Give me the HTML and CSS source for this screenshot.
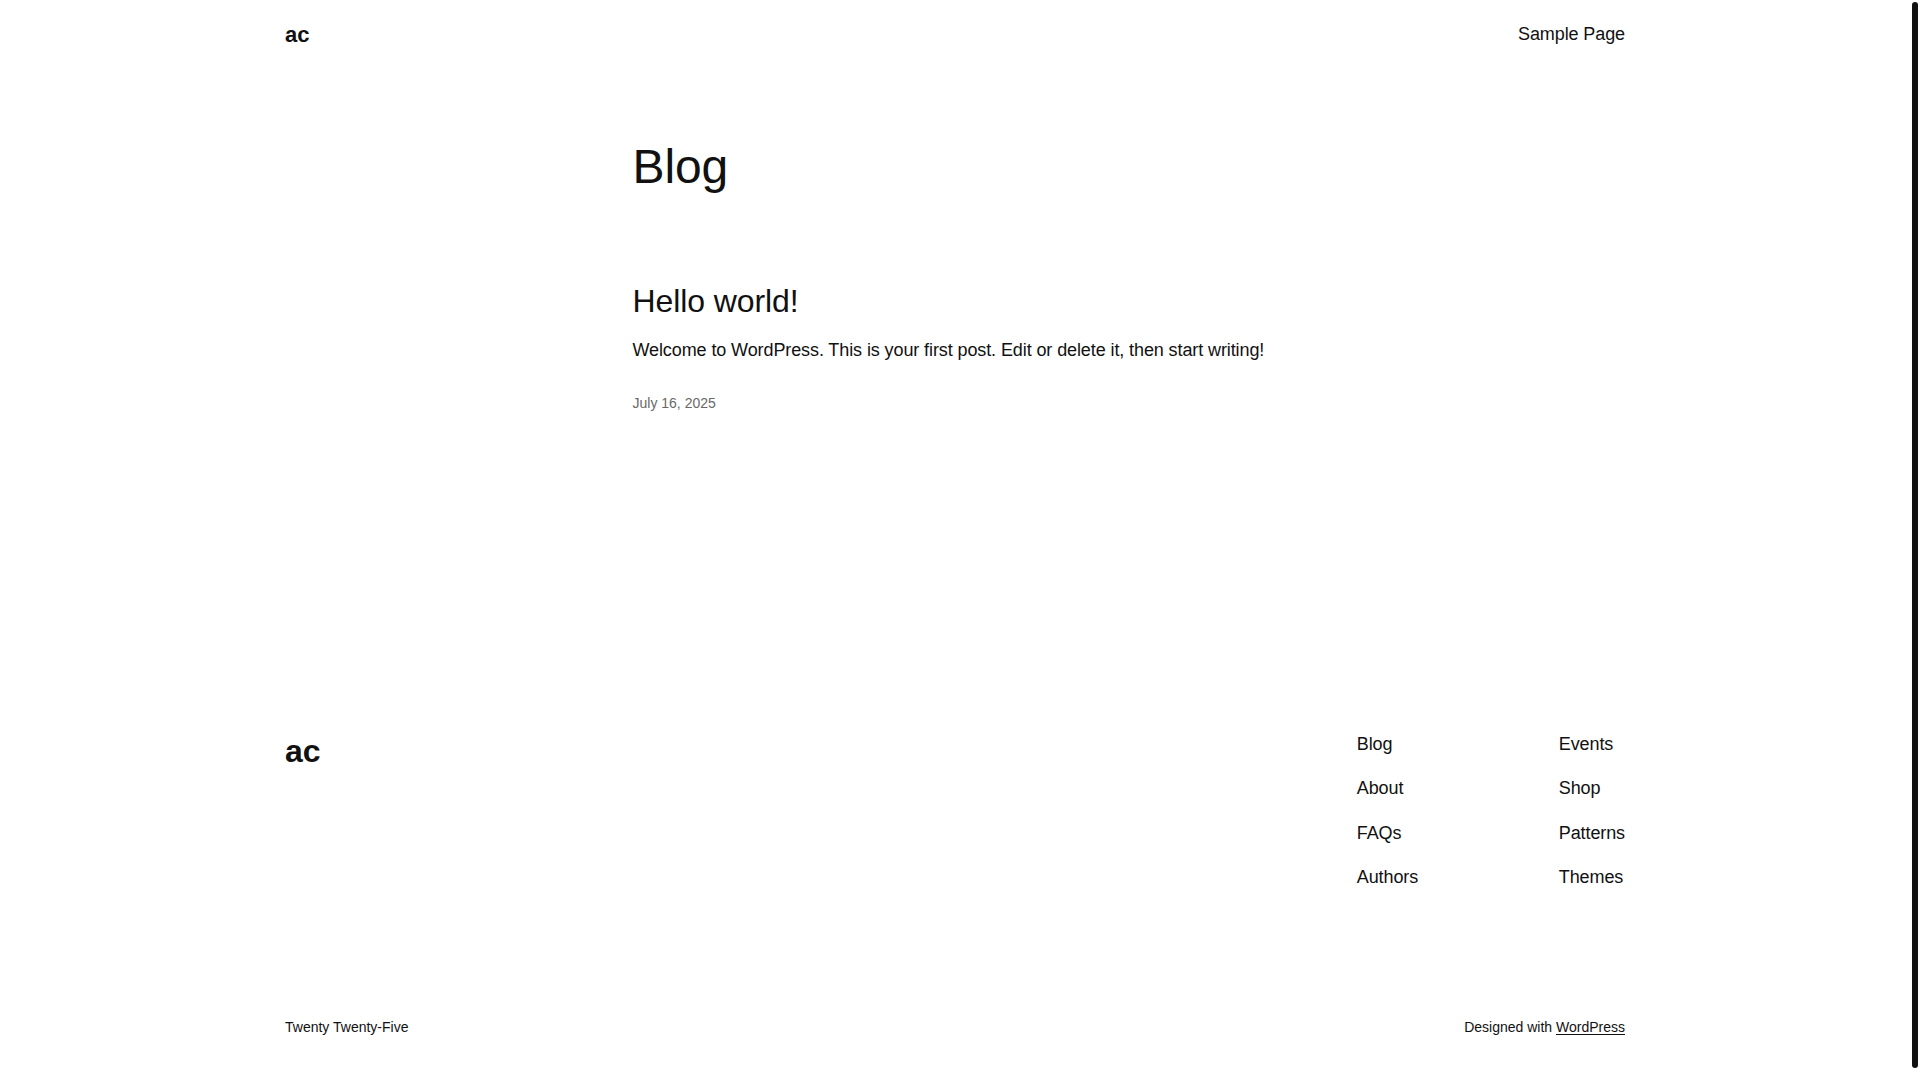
FILE: index.html
```html
<!DOCTYPE html>
<html lang="en">
<head>
<meta charset="utf-8">
<title>ac – Blog</title>
<link rel="stylesheet" href="styles.css">
</head>
<body>
<div class="site">
  <header class="site-header">
    <div class="wide header-row">
      <a class="site-title" href="#">ac</a>
      <nav class="header-nav"><a href="#">Sample Page</a></nav>
    </div>
  </header>

  <main class="site-main">
    <div class="content">
      <h1 class="page-title">Blog</h1>
      <article class="post">
        <h2 class="post-title"><a href="#">Hello world!</a></h2>
        <p class="post-excerpt">Welcome to WordPress. This is your first post. Edit or delete it, then start writing!</p>
        <div class="post-date">July 16, 2025</div>
      </article>
    </div>
  </main>

  <footer class="site-footer">
    <div class="wide footer-top">
      <a class="footer-title" href="#">ac</a>
      <div class="footer-navs">
        <nav class="footer-nav">
          <a href="#">Blog</a>
          <a href="#">About</a>
          <a href="#">FAQs</a>
          <a href="#">Authors</a>
        </nav>
        <nav class="footer-nav">
          <a href="#">Events</a>
          <a href="#">Shop</a>
          <a href="#">Patterns</a>
          <a href="#">Themes</a>
        </nav>
      </div>
    </div>
    <div class="wide footer-bottom">
      <span>Twenty Twenty-Five</span>
      <span>Designed with <a class="wp-link" href="#">WordPress</a></span>
    </div>
  </footer>
</div>
<div class="scrollbar" aria-hidden="true"><div class="scrollbar-thumb"></div></div>
</body>
</html>
```

FILE: styles.css
```css
html, body {
  margin: 0;
  padding: 0;
  background: #ffffff;
}

body {
  font-family: "Liberation Sans", Arial, sans-serif;
  color: #111111;
  font-size: 18px;
  line-height: 1.4;
  letter-spacing: -0.1px;
}

a {
  color: inherit;
  text-decoration: none;
}

.site {
  width: calc(100% - 10px);
}

.wide {
  width: 1340px;
  margin: 0 auto;
}

.content {
  width: 645px;
  margin: 0 auto;
}

/* Header */
.site-header {
  height: 70px;
  display: flex;
  align-items: center;
}

.header-row {
  display: flex;
  justify-content: space-between;
  align-items: center;
}

.site-title {
  font-size: 22px;
  font-weight: 700;
  line-height: 1.4;
}

.header-nav {
  font-size: 18px;
}

/* Main */
.site-main {
  padding-top: 68px;
}

.page-title {
  margin: 0;
  font-size: 48px;
  font-weight: 400;
  line-height: 1.2;
  letter-spacing: -0.1px;
}

.post {
  margin-top: 86px;
  display: flex;
  flex-direction: column;
}

.post-title {
  margin: 0;
  font-size: 32px;
  font-weight: 400;
  line-height: 1.2;
}

.post-excerpt {
  margin: 18px 0 0;
  font-size: 18px;
  line-height: 1.4;
}

.post-date {
  margin-top: 31px;
  font-size: 14px;
  line-height: 1.4;
  letter-spacing: 0;
  color: #686868;
}

/* Footer */
.site-footer {
  padding-top: 318px;
  padding-bottom: 50px;
}

.footer-top {
  display: flex;
  justify-content: space-between;
  align-items: flex-start;
}

.footer-title {
  font-size: 32px;
  font-weight: 700;
  line-height: 1.2;
}

.footer-navs {
  display: flex;
}

.footer-nav {
  display: flex;
  flex-direction: column;
  gap: 19.3px;
  font-size: 18px;
  line-height: 1.4;
}

.footer-nav:first-child {
  width: 202px;
}

.footer-bottom {
  margin-top: 128px;
  display: flex;
  justify-content: space-between;
  font-size: 14px;
  line-height: 1.4;
  letter-spacing: 0;
}

.wp-link {
  text-decoration: underline;
  text-decoration-thickness: 1px;
  text-underline-offset: 2px;
}

/* Browser scrollbar as seen in the screenshot */
.scrollbar {
  position: fixed;
  top: 0;
  right: 0;
  width: 10px;
  height: 100vh;
}

.scrollbar-thumb {
  position: absolute;
  top: 2px;
  left: 2px;
  width: 6px;
  height: 1066px;
  border-radius: 3px;
  background: #111111;
}
```
